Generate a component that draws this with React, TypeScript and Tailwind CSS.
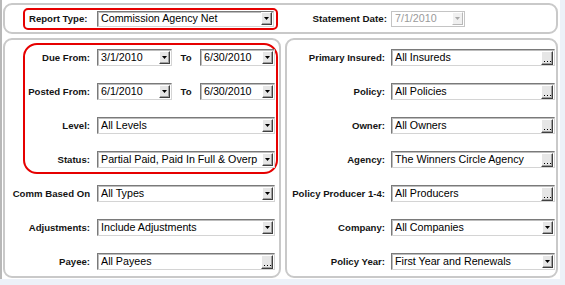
import React from "react";

type Kind = "drop" | "dots";

function DropBtn({ disabled }: { disabled?: boolean }) {
  return (
    <div
      className={
        "w-[11px] h-[13px] shrink-0 flex items-center justify-center border border-t-white border-l-white " +
        (disabled
          ? "bg-[#f0f0f0] border-r-[#b8b8b8] border-b-[#b8b8b8]"
          : "bg-[#e6e6e6] border-r-[#404040] border-b-[#404040] shadow-[inset_-1px_-1px_0_#a0a0a0]")
      }
    >
      <svg width="5" height="3" viewBox="0 0 5 3">
        <polygon points="0,0 5,0 2.5,3" fill={disabled ? "#a8a8a8" : "#000"} />
      </svg>
    </div>
  );
}

function DotsBtn() {
  return (
    <div className="w-[12px] h-[14px] shrink-0 flex items-end justify-center pb-[2px] bg-[#e6e6e6] border border-t-white border-l-white border-r-[#404040] border-b-[#404040] shadow-[inset_-1px_-1px_0_#a0a0a0]">
      <svg width="7" height="1" viewBox="0 0 7 1">
        <rect x="0" y="0" width="1" height="1" fill="#000" />
        <rect x="3" y="0" width="1" height="1" fill="#000" />
        <rect x="6" y="0" width="1" height="1" fill="#000" />
      </svg>
    </div>
  );
}

function Field({
  value,
  w,
  kind = "drop",
  disabled,
  h = "h-[17px]",
}: {
  value: string;
  w: string;
  kind?: Kind;
  disabled?: boolean;
  h?: string;
}) {
  return (
    <div
      className={
        w +
        " " +
        h +
        " shrink-0 flex items-center bg-white border pl-[3px] pr-[1px] " +
        (disabled
          ? "border-[#c4c4c4]"
          : "border-t-[#7a7a7a] border-l-[#7a7a7a] border-r-[#d4d4d4] border-b-[#d4d4d4] shadow-[inset_1px_1px_0_#bdbdbd]")
      }
    >
      <span
        className={
          "flex-1 min-w-0 whitespace-nowrap overflow-hidden text-[10.7px] leading-none " +
          (disabled ? "text-[#9a9a9a]" : "text-black")
        }
      >
        {value}
      </span>
      {kind === "drop" ? <DropBtn disabled={disabled} /> : <DotsBtn />}
    </div>
  );
}

function Label({ text, w }: { text: string; w: string }) {
  return (
    <div className={w + " shrink-0 text-right font-bold text-[9.6px] leading-none text-[#141414] whitespace-nowrap"}>
      {text}
    </div>
  );
}

function Row({
  label,
  lw,
  gap,
  value,
  fw,
  kind,
}: {
  label: string;
  lw: string;
  gap: string;
  value: string;
  fw: string;
  kind?: Kind;
}) {
  return (
    <div className="flex items-center h-[17px]">
      <Label text={label} w={lw} />
      <div className={gap} />
      <Field value={value} w={fw} kind={kind} />
    </div>
  );
}

export default function App() {
  return (
    <div className="w-[565px] h-[285px] bg-[#edf1f8] font-['Liberation_Sans',Arial,sans-serif]">
      <div className="w-[560px] h-[279px] bg-white border-l-2 border-[#b8b8b8] pl-px pt-[3px]">
        {/* top panel */}
        <div className="w-[555px] h-[31px] rounded-[9px] border-2 border-[#c9c9c9] flex items-center">
          <div className="ml-[18px] w-[255px] h-[22px] border-2 border-[#e60000] rounded-[5px] flex items-center pl-[4px]">
            <div className="w-[68px] font-bold text-[9.6px] leading-none text-[#141414] whitespace-nowrap">
              Report Type:
            </div>
            <Field value="Commission Agency Net" w="w-[177px]" h="h-[16px]" />
          </div>
          <div className="w-[109px] text-right font-bold text-[9.8px] leading-none text-[#141414] whitespace-nowrap">
            Statement Date:
          </div>
          <div className="w-[4px]" />
          <Field value="7/1/2010" w="w-[74px]" h="h-[16px]" disabled />
        </div>

        <div className="flex gap-[4px] mt-[4px]">
          {/* left panel */}
          <div className="w-[278px] h-[240px] rounded-[9px] border-2 border-[#c9c9c9] pt-[3px]">
            <div className="ml-[18px] w-[255px] border-2 border-[#e60000] rounded-[14px] pt-[4px] pb-[4px] flex flex-col gap-[17px]">
              <div className="flex items-center h-[17px]">
                <Label text="Due From:" w="w-[65px]" />
                <div className="w-[7px]" />
                <Field value="3/1/2010" w="w-[75px]" />
                <div className="w-[28px] text-center font-bold text-[9.6px] leading-none text-[#141414]">To</div>
                <Field value="6/30/2010" w="w-[75px]" />
              </div>
              <div className="flex items-center h-[17px]">
                <Label text="Posted From:" w="w-[65px]" />
                <div className="w-[7px]" />
                <Field value="6/1/2010" w="w-[75px]" />
                <div className="w-[28px] text-center font-bold text-[9.6px] leading-none text-[#141414]">To</div>
                <Field value="6/30/2010" w="w-[75px]" />
              </div>
              <Row label="Level:" lw="w-[65px]" gap="w-[7px]" value="All Levels" fw="w-[178px]" />
              <Row
                label="Status:"
                lw="w-[65px]"
                gap="w-[7px]"
                value="Partial Paid, Paid In Full & Overp"
                fw="w-[178px]"
              />
            </div>
            <div className="mt-[11px] flex flex-col gap-[17px]">
              <Row label="Comm Based On" lw="w-[85px]" gap="w-[7px]" value="All Types" fw="w-[178px]" />
              <Row label="Adjustments:" lw="w-[85px]" gap="w-[7px]" value="Include Adjustments" fw="w-[178px]" />
              <Row label="Payee:" lw="w-[85px]" gap="w-[7px]" value="All Payees" fw="w-[178px]" kind="dots" />
            </div>
          </div>

          {/* right panel */}
          <div className="w-[273px] h-[240px] rounded-[9px] border-2 border-[#c9c9c9] pt-[9px] flex flex-col gap-[17px]">
            <Row label="Primary Insured:" lw="w-[98px]" gap="w-[6px]" value="All Insureds" fw="w-[164px]" kind="dots" />
            <Row label="Policy:" lw="w-[98px]" gap="w-[6px]" value="All Policies" fw="w-[164px]" kind="dots" />
            <Row label="Owner:" lw="w-[98px]" gap="w-[6px]" value="All Owners" fw="w-[164px]" kind="dots" />
            <Row label="Agency:" lw="w-[98px]" gap="w-[6px]" value="The Winners Circle Agency" fw="w-[164px]" kind="dots" />
            <Row label="Policy Producer 1-4:" lw="w-[98px]" gap="w-[6px]" value="All Producers" fw="w-[164px]" kind="dots" />
            <Row label="Company:" lw="w-[98px]" gap="w-[6px]" value="All Companies" fw="w-[164px]" />
            <Row label="Policy Year:" lw="w-[98px]" gap="w-[6px]" value="First Year and Renewals" fw="w-[164px]" />
          </div>
        </div>
      </div>
    </div>
  );
}
